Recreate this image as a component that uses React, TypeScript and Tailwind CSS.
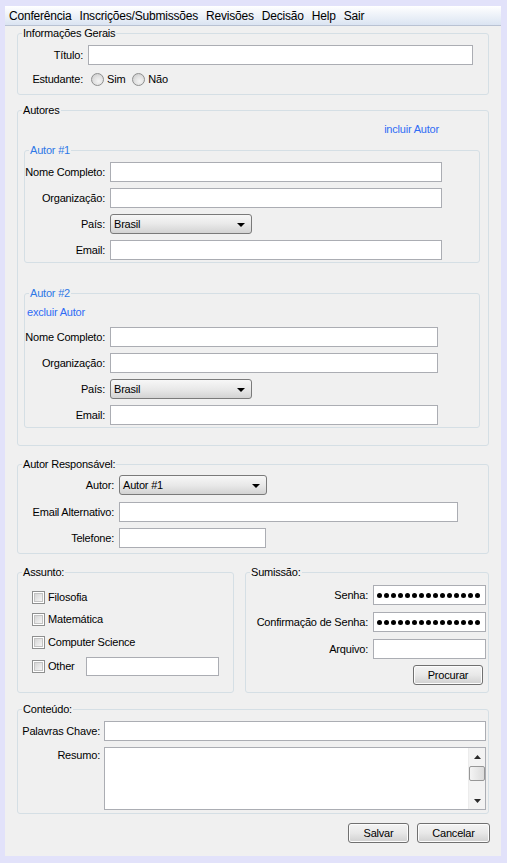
import type { ReactNode } from "react";

const menuItems = ["Conferência", "Inscrições/Submissões", "Revisões", "Decisão", "Help", "Sair"];

function Group({
  legend,
  blue,
  className = "",
  children,
}: {
  legend: string;
  blue?: boolean;
  className?: string;
  children: ReactNode;
}) {
  return (
    <fieldset className={`rounded-[3px] border border-[#d5dfe5] ${className}`}>
      <legend
        className={`ml-[4px] px-[1px] leading-[15px] ${blue ? "text-[#2e78e6]" : "text-black"}`}
      >
        {legend}
      </legend>
      {children}
    </fieldset>
  );
}

function TextBox({ w, h = "h-[20px]" }: { w: string; h?: string }) {
  return <input readOnly className={`${h} ${w} shrink-0 border border-[#abadb3] bg-white outline-none`} />;
}

function Combo({ w, text }: { w: string; text: string }) {
  return (
    <div
      className={`flex h-[20px] shrink-0 items-center rounded-[3px] border border-[#7a7a7a] bg-gradient-to-b from-[#f7f7f7] via-[#e9e9e9] to-[#d3d3d3] pl-[3px] ${w}`}
    >
      <span>{text}</span>
      <svg className="ml-auto mr-[6px] mt-[2px]" width="8" height="4" viewBox="0 0 8 4">
        <path d="M0 0H8L4 4Z" fill="#000" />
      </svg>
    </div>
  );
}

function Button({ w, children }: { w: string; children: ReactNode }) {
  return (
    <div
      className={`flex h-[20px] items-center justify-center rounded-[3px] border border-[#707070] bg-gradient-to-b from-[#f4f4f4] via-[#e8e8e8] to-[#d0d0d0] shadow-[inset_0_0_0_1px_#fcfcfc] ${w}`}
    >
      {children}
    </div>
  );
}

function Radio() {
  return (
    <span className="block size-[13px] rounded-full border border-[#8e8f8f] bg-[radial-gradient(circle_at_60%_65%,#f4f4f4_0%,#e2e2e2_45%,#c6c6c6_100%)]" />
  );
}

function Check() {
  return (
    <span className="flex size-[13px] shrink-0 items-center justify-center border border-[#8e8f8f] bg-white">
      <span className="block size-[9px] border border-[#c3c3c3] bg-gradient-to-br from-[#d6d6d6] to-[#f6f6f6]" />
    </span>
  );
}

function Row({ label, labelW, children, className = "" }: { label: string; labelW: string; children: ReactNode; className?: string }) {
  return (
    <div className={`flex h-[20px] items-center gap-[5px] ${className}`}>
      <span className={`${labelW} shrink-0 whitespace-nowrap text-right`}>{label}</span>
      {children}
    </div>
  );
}

function Password() {
  return (
    <div className="flex h-[20px] w-[113px] items-center gap-[2px] border border-[#abadb3] bg-white pl-[3px]">
      {Array.from({ length: 15 }).map((_, i) => (
        <span key={i} className="block size-[5px] rounded-full bg-black" />
      ))}
    </div>
  );
}

function AutorBlock({ n, inputW, excluir, className }: { n: number; inputW: string; excluir?: boolean; className: string }) {
  return (
    <Group legend={`Autor #${n}`} blue className={`ml-[6px] mr-[8px] ${className}`}>
      {excluir && <div className="mt-[4px] pl-[2px] leading-[15px] text-[#2f6cf5]">excluir Autor</div>}
      <div className={`flex flex-col gap-[6px] pb-[2px] ${excluir ? "mt-[7px]" : "mt-[4px]"}`}>
        <Row label="Nome Completo:" labelW="w-[80px]">
          <TextBox w={inputW} />
        </Row>
        <Row label="Organização:" labelW="w-[80px]">
          <TextBox w={inputW} />
        </Row>
        <Row label="País:" labelW="w-[80px]">
          <Combo w="w-[142px]" text="Brasil" />
        </Row>
        <Row label="Email:" labelW="w-[80px]">
          <TextBox w={inputW} />
        </Row>
      </div>
    </Group>
  );
}

export default function App() {
  return (
    <div className="h-[863px] w-[507px] bg-[#e2e2fa] pl-[5px] pt-[6px] font-['Liberation_Sans',Arial,sans-serif] text-[11px] tracking-[-0.2px] text-black">
      <div className="flex h-[850px] w-[496px] flex-col bg-[#f0f0f0]">
        {/* menu bar */}
        <div className="flex h-[20px] shrink-0 items-center border-b border-[#b9c2d3] bg-gradient-to-b from-[#ffffff] to-[#dbe4f2] text-[12px]">
          {menuItems.map((m) => (
            <span key={m} className="px-[4px]">
              {m}
            </span>
          ))}
        </div>

        <div className="flex flex-col px-[12px]">
          <Group legend="Informações Gerais">
            <div className="pb-[7px] pt-[4px]">
              <Row label="Título:" labelW="w-[65px]">
                <TextBox w="w-[385px]" />
              </Row>
              <div className="mt-[6px] flex h-[16px] items-center">
                <span className="w-[65px] text-right">Estudante:</span>
                <span className="ml-[8px]">
                  <Radio />
                </span>
                <span className="ml-[3px]">Sim</span>
                <span className="ml-[7px]">
                  <Radio />
                </span>
                <span className="ml-[3px]">Não</span>
              </div>
            </div>
          </Group>

          <Group legend="Autores" className="mt-[8px] pb-[17px]">
            <div className="mt-[4px] flex justify-end pr-[49px] leading-[15px] text-[#2f6cf5]">incluir Autor</div>
            <AutorBlock n={1} inputW="w-[332px]" className="mt-[6px]" />
            <AutorBlock n={2} inputW="w-[328px]" excluir className="mt-[23px]" />
          </Group>

          <Group legend="Autor Responsável:" className="mt-[11px] pb-[5px]">
            <Row label="Autor:" labelW="w-[96px]" className="mt-[3px]">
              <Combo w="w-[148px]" text="Autor #1" />
            </Row>
            <Row label="Email Alternativo:" labelW="w-[96px]" className="mt-[7px]">
              <TextBox w="w-[339px]" />
            </Row>
            <Row label="Telefone:" labelW="w-[96px]" className="mt-[6px]">
              <TextBox w="w-[147px]" />
            </Row>
          </Group>

          <div className="mt-[11px] flex gap-[11px]">
            <Group legend="Assunto:" className="w-[217px]">
              <div className="flex flex-col pl-[14px]">
                <div className="mt-[9px] flex h-[16px] items-center gap-[3px]">
                  <Check />
                  <span>Filosofia</span>
                </div>
                <div className="mt-[6px] flex h-[16px] items-center gap-[3px]">
                  <Check />
                  <span>Matemática</span>
                </div>
                <div className="mt-[7px] flex h-[16px] items-center gap-[3px]">
                  <Check />
                  <span>Computer Science</span>
                </div>
                <div className="mt-[6px] flex h-[20px] items-center">
                  <Check />
                  <span className="ml-[3px]">Other</span>
                  <span className="ml-[11px]">
                    <TextBox w="w-[133px]" h="h-[19px]" />
                  </span>
                </div>
              </div>
            </Group>

            <Group legend="Sumissão:" className="w-[244px] pb-[7px]">
              <div className="flex flex-col pr-[2px]">
                <div className="mt-[5px] flex h-[20px] items-center justify-end gap-[5px]">
                  <span>Senha:</span>
                  <Password />
                </div>
                <div className="mt-[7px] flex h-[20px] items-center justify-end gap-[5px]">
                  <span>Confirmação de Senha:</span>
                  <Password />
                </div>
                <div className="mt-[7px] flex h-[20px] items-center justify-end gap-[5px]">
                  <span>Arquivo:</span>
                  <TextBox w="w-[113px]" />
                </div>
                <div className="mt-[6px] flex justify-end pr-[3px]">
                  <Button w="w-[70px]">Procurar</Button>
                </div>
              </div>
            </Group>
          </div>

          <Group legend="Conteúdo:" className="mt-[9px] pb-[3px]">
            <div className="mt-[4px] flex h-[20px] items-center gap-[4px]">
              <span className="w-[82px] text-right">Palavras Chave:</span>
              <TextBox w="w-[382px]" />
            </div>
            <div className="mt-[6px] flex items-start gap-[4px]">
              <span className="w-[82px] pt-[1px] text-right leading-[15px]">Resumo:</span>
              <div className="flex h-[63px] w-[382px] border border-[#abadb3] bg-white">
                <div className="flex-1" />
                <div className="flex w-[17px] flex-col items-center border-l border-[#ececec] bg-[#f3f3f3]">
                  <div className="flex h-[17px] items-center justify-center">
                    <svg width="7" height="4" viewBox="0 0 7 4">
                      <path d="M0 4H7L3.5 0Z" fill="#2a2a2a" />
                    </svg>
                  </div>
                  <div className="mt-[1px] h-[15px] w-[16px] rounded-[2px] border border-[#979797] bg-gradient-to-r from-[#f4f4f4] to-[#dcdcdc]" />
                  <div className="flex-1" />
                  <div className="flex h-[17px] items-center justify-center">
                    <svg width="7" height="4" viewBox="0 0 7 4">
                      <path d="M0 0H7L3.5 4Z" fill="#2a2a2a" />
                    </svg>
                  </div>
                </div>
              </div>
            </div>
          </Group>
        </div>

        <div className="mt-[9px] flex justify-end gap-[8px] pr-[11px]">
          <Button w="w-[61px]">Salvar</Button>
          <Button w="w-[73px]">Cancelar</Button>
        </div>
      </div>
    </div>
  );
}
